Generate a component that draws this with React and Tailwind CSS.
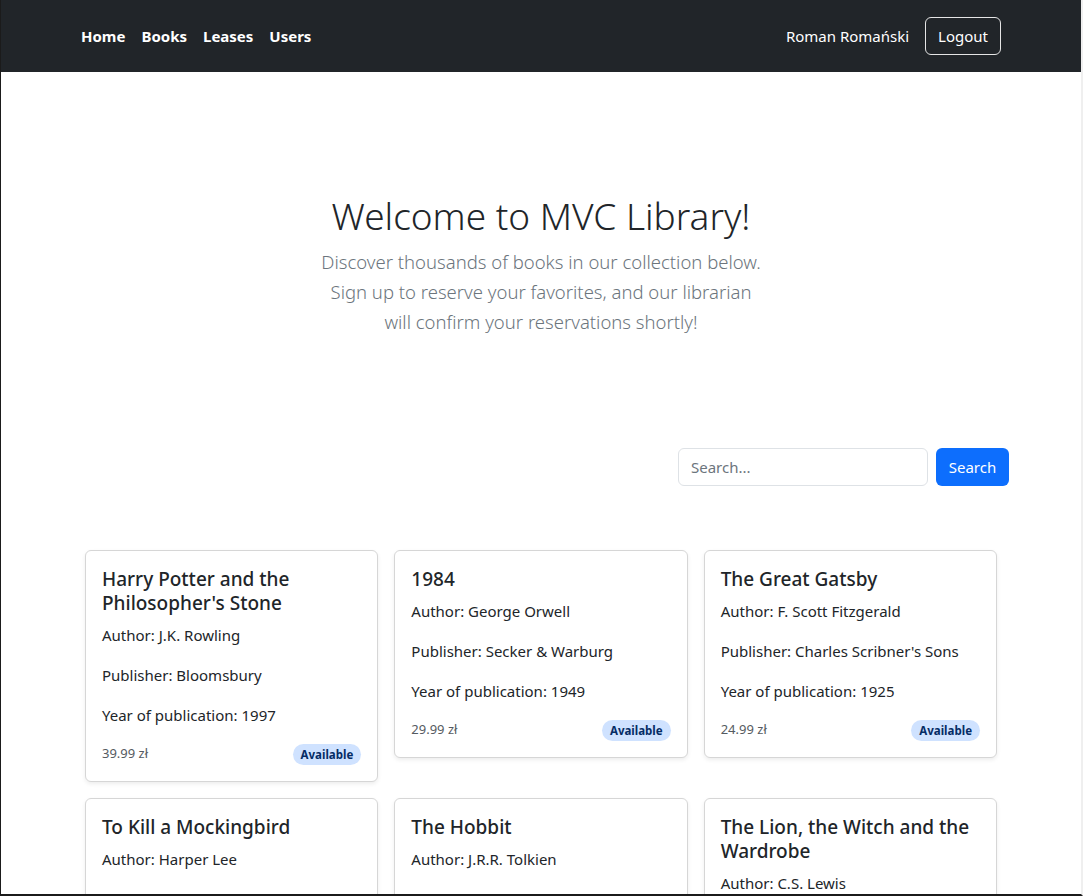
import React from 'react';

const books = [
  { id: 1, title: "Harry Potter and the Philosopher's Stone", author: 'J.K. Rowling', publisher: 'Bloomsbury', year: 1997, price: '39.99' },
  { id: 2, title: '1984', author: 'George Orwell', publisher: 'Secker & Warburg', year: 1949, price: '29.99' },
  { id: 3, title: 'The Great Gatsby', author: 'F. Scott Fitzgerald', publisher: "Charles Scribner's Sons", year: 1925, price: '24.99' },
  { id: 4, title: 'To Kill a Mockingbird', author: 'Harper Lee', publisher: 'J.B. Lippincott & Co.', year: 1960, price: '34.99' },
  { id: 5, title: 'The Hobbit', author: 'J.R.R. Tolkien', publisher: 'George Allen & Unwin', year: 1937, price: '32.99' },
  { id: 6, title: 'The Lion, the Witch and the Wardrobe', author: 'C.S. Lewis', publisher: 'Geoffrey Bles', year: 1950, price: '27.99' },
];

function BookCard({ book }) {
  return (
    <div className="rounded-[6px] border border-[#d6d6d6] bg-white p-4 shadow-[0_2px_4px_rgba(0,0,0,0.075)]">
      <h5 className="mb-2 text-[19px] font-medium leading-[24px] text-[#212529]">{book.title}</h5>
      <p className="mb-4 leading-6">Author: {book.author}</p>
      <p className="mb-4 leading-6">Publisher: {book.publisher}</p>
      <p className="mb-4 leading-6">Year of publication: {book.year}</p>
      <div className="flex h-[22px] items-center justify-between">
        <span className="text-[13px] text-[#555b61]">{book.price} zł</span>
        <span className="rounded-full bg-[#cfe2ff] px-[8px] py-[3px] text-[11.5px] font-bold leading-[15px] text-[#052c65]">Available</span>
      </div>
    </div>
  );
}

export default function App() {
  return (
    <div
      className="h-[896px] overflow-hidden border-b-2 border-l border-r-2 border-b-[#1b1b1b] border-l-[#1b1b1b] border-r-[#efefef] bg-white text-[16px] text-[#212529]"
      style={{ fontFamily: '"Noto Sans", "Open Sans", sans-serif' }}
    >
      <nav className="flex h-[72px] items-center bg-[#212529] pl-[72px] pr-[80px]">
        <ul className="flex items-center">
          {['Home', 'Books', 'Leases', 'Users'].map(l => (
            <li key={l} className="px-2 text-[15px] font-bold text-white">{l}</li>
          ))}
        </ul>
        <div className="ml-auto flex items-center gap-4">
          <span className="text-[15px] text-white">Roman Romański</span>
          <button className="h-[38px] rounded-[6px] border border-[#e5e5e5] px-3 text-[15px] text-white">Logout</button>
        </div>
      </nav>

      <section className="pt-[121px] text-center">
        <h1 className="text-[37px] font-light leading-[46px] text-[#212529]">Welcome to MVC Library!</h1>
        <p className="mx-auto mt-2 w-[460px] text-[18.5px] font-light leading-[30px] text-[#6c757d]">
          Discover thousands of books in our collection below.
          <br />Sign up to reserve your favorites, and our librarian
          <br />will confirm your reservations shortly!
        </p>
      </section>

      <div className="mt-[111px] flex justify-end gap-2 pr-[72px]">
        <input
          className="h-[38px] w-[250px] rounded-[6px] border border-[#dee2e6] px-3 text-[15px] placeholder:text-[#6c757d]"
          placeholder="Search..."
        />
        <button className="h-[38px] w-[73px] rounded-[6px] bg-[#0d6efd] text-[15px] text-white">Search</button>
      </div>

      <div className="mx-auto mt-16 grid w-[912px] grid-cols-3 items-start gap-x-4 gap-y-4 text-[15px]">
        {books.map(b => (
          <BookCard key={b.id} book={b} />
        ))}
      </div>
    </div>
  );
}
